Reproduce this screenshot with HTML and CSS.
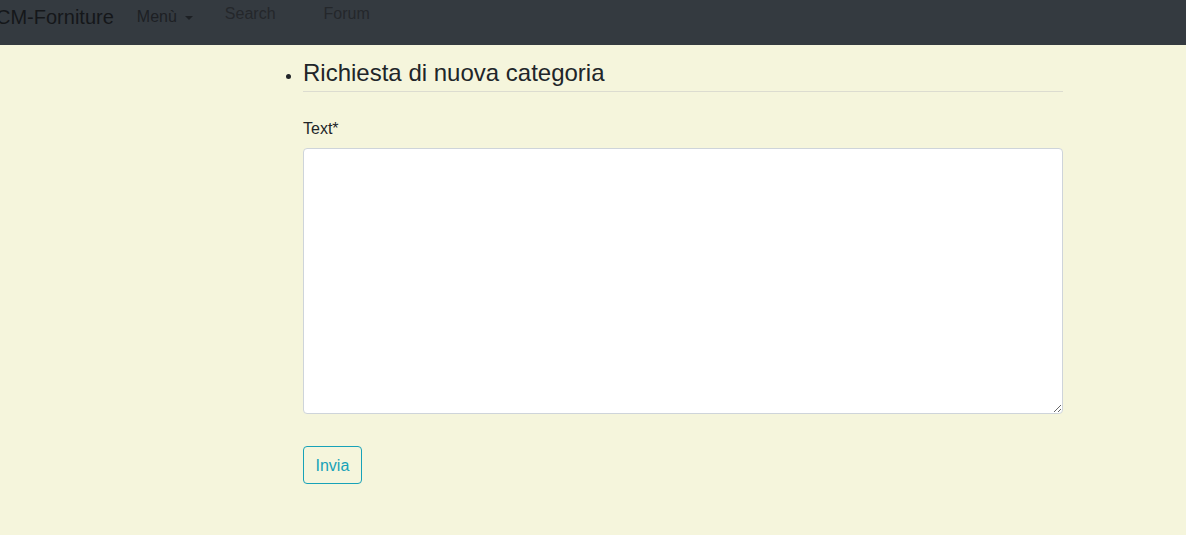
FILE: index.html
```html
<!DOCTYPE html>
<html lang="it">
<head>
<meta charset="utf-8">
<title>Richiesta di nuova categoria</title>
<link rel="stylesheet" href="styles.css">
</head>
<body>
<nav class="navbar">
  <a class="brand" href="#">CM-Forniture</a>
  <a class="nav-link dropdown" href="#">Menù<span class="caret"></span></a>
  <a class="nav-link plain search" href="#">Search</a>
  <a class="nav-link plain forum" href="#">Forum</a>
</nav>
<main class="content">
  <ul class="list">
    <li class="item">
      <h4 class="title">Richiesta di nuova categoria</h4>
      <hr class="rule">
      <form class="form">
        <label class="label" for="text">Text*</label>
        <textarea class="textarea" id="text"></textarea>
        <button class="btn" type="button">Invia</button>
      </form>
    </li>
  </ul>
</main>
</body>
</html>
```
FILE: styles.css
```css
html, body {
  margin: 0;
  padding: 0;
}
body {
  background: #f5f5dc;
  font-family: "Liberation Sans", Arial, sans-serif;
  font-size: 16px;
  line-height: 1.5;
  color: #212529;
  overflow: hidden;
}
.navbar {
  height: 45px;
  background: #343a40;
  display: flex;
  align-items: flex-start;
}
.navbar a {
  text-decoration: none;
}
.brand {
  margin-left: -4px;
  font-size: 20px;
  line-height: 30px;
  padding-top: 2px;
  color: #15171a;
  margin-right: 23px;
}
.nav-link {
  font-size: 16px;
  line-height: 24px;
}
.dropdown {
  padding-top: 5px;
  color: #1d2024;
  display: flex;
  align-items: center;
}
.caret {
  display: inline-block;
  margin-left: 8px;
  margin-top: 1px;
  border-top: 4px solid #1d2024;
  border-left: 4px solid transparent;
  border-right: 4px solid transparent;
}
.plain {
  padding-top: 2px;
  color: #24272b;
}
.search {
  margin-left: 32px;
}
.forum {
  margin-left: 48px;
}
.content {
  padding-left: 263px;
  width: 800px;
}
.list {
  margin: 0;
  padding: 0 0 0 40px;
}
.item {
  padding-top: 14px;
}
.item::marker {
  font-size: 18px;
}
.title {
  margin: 0;
  font-size: 24px;
  font-weight: 400;
  line-height: 1.2;
}
.rule {
  margin: 3px 0 0 0;
  border: 0;
  border-top: 1px solid #dcdcd0;
}
.form {
  display: flex;
  flex-direction: column;
  align-items: flex-start;
  padding-top: 25px;
}
.label {
  margin-bottom: 7px;
  line-height: 24px;
}
.textarea {
  box-sizing: border-box;
  width: 760px;
  height: 266px;
  border: 1px solid #ced4da;
  border-radius: 4px;
  background: #fff;
  padding: 6px 12px;
  font: inherit;
  margin: 0;
}
.btn {
  margin-top: 32px;
  font: inherit;
  font-size: 16px;
  line-height: 24px;
  padding: 7px 11.5px 5px;
  color: #17a2b8;
  background: transparent;
  border: 1px solid #17a2b8;
  border-radius: 4px;
}
```
